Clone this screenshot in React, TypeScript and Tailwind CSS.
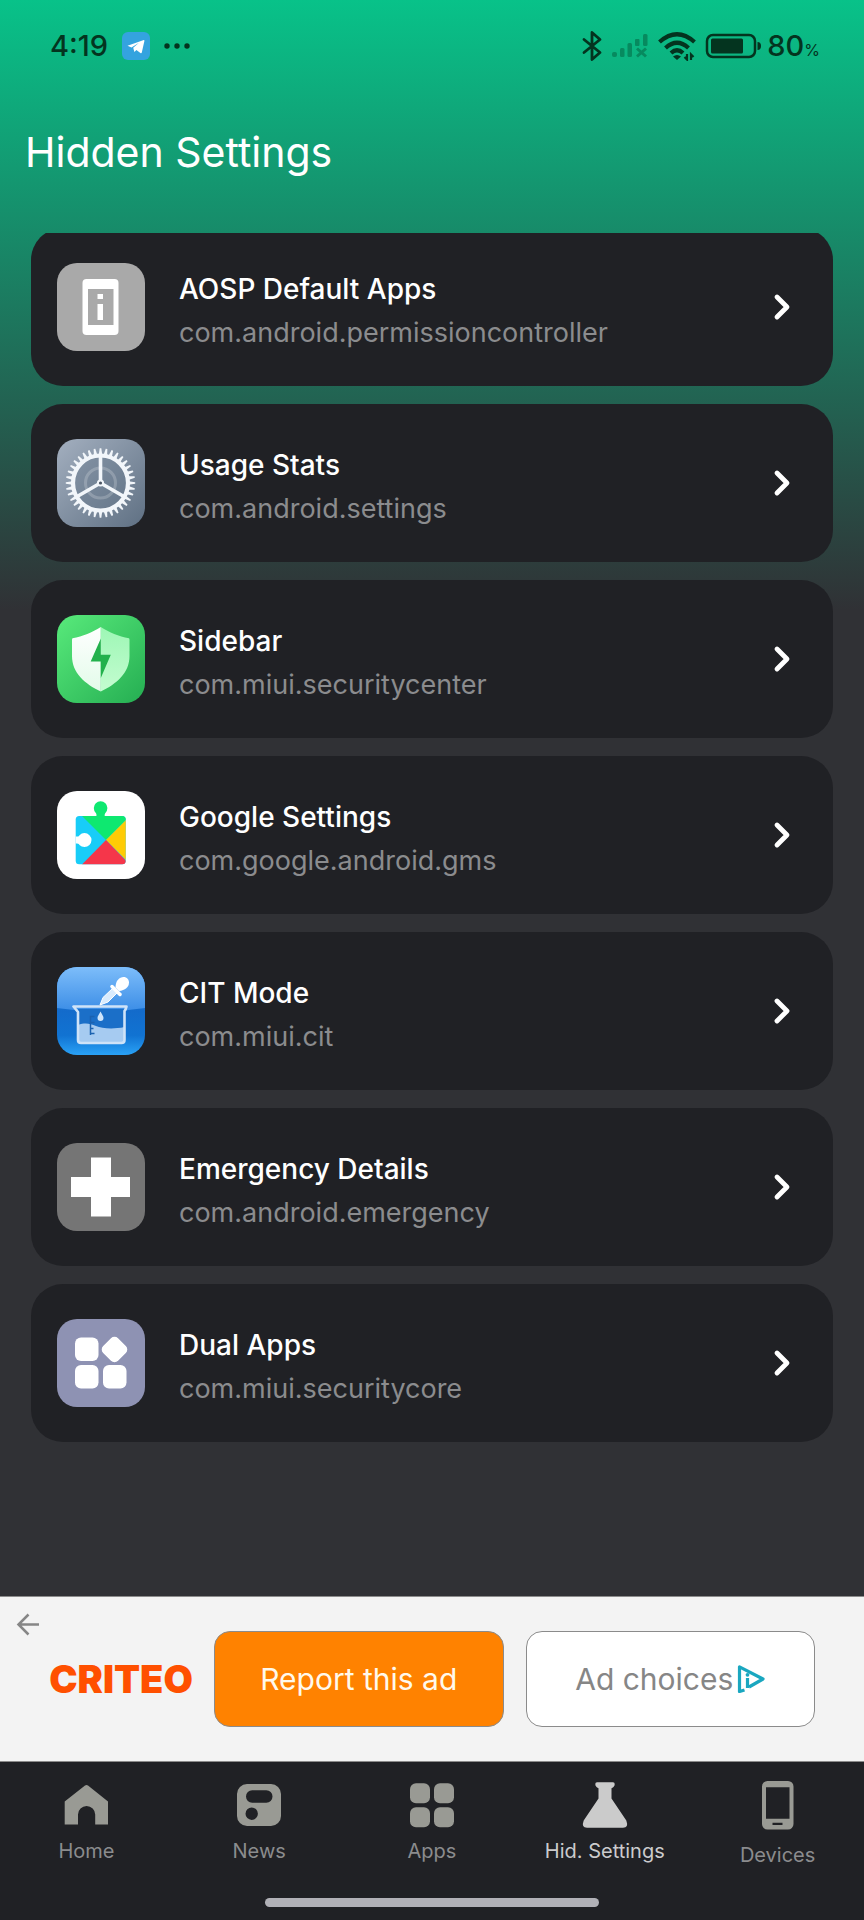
import React from 'react';

type IconProps = { className?: string };

function AospIcon() {
  return (
    <svg viewBox="0 0 88 88" className="block size-full" aria-hidden="true">
      <rect width="88" height="88" fill="#a9a9a9" />
      <rect x="25.5" y="16" width="36" height="56" rx="4" fill="#fff" />
      <rect x="31" y="26" width="25.5" height="36" fill="#a9a9a9" />
      <rect x="40.5" y="31" width="5.5" height="5" fill="#fff" />
      <rect x="40.5" y="41" width="5.5" height="16" fill="#fff" />
    </svg>
  );
}

function SettingsIcon() {
  const teeth = Array.from({ length: 36 }, (_, i) => i * 10);
  return (
    <svg viewBox="0 0 88 88" className="block size-full" aria-hidden="true">
      <defs>
        <linearGradient id="settings-bg" x1="0" y1="0" x2="1" y2="1">
          <stop offset="0" stopColor="#a3afbf" />
          <stop offset="1" stopColor="#5f7083" />
        </linearGradient>
      </defs>
      <rect width="88" height="88" fill="url(#settings-bg)" />
      <circle cx="43.5" cy="44" r="26" fill="#5b6d82" fillOpacity="0.3" />
      <circle cx="43.5" cy="44" r="15" fill="none" stroke="#fff" strokeOpacity="0.2" strokeWidth="3" />
      <g fill="#f2f6fa">
        {teeth.map((a) => (
          <path key={a} d="M41.7 16L42.7 9.3H44.3L45.3 16z" transform={`rotate(${a} 43.5 44)`} />
        ))}
      </g>
      <circle cx="43.5" cy="44" r="27.5" fill="none" stroke="#f2f6fa" strokeWidth="4.2" />
      <path d="M43.5 44V18M43.5 44L21 57M43.5 44L66 57" stroke="#f2f6fa" strokeWidth="3.6" />
      <circle cx="43.5" cy="44" r="3.6" fill="#f2f6fa" />
      <circle cx="43.5" cy="44" r="1.6" fill="#4b5563" />
    </svg>
  );
}

function SecurityIcon() {
  return (
    <svg viewBox="0 0 88 88" className="block size-full" aria-hidden="true">
      <defs>
        <linearGradient id="security-bg" x1="0" y1="0" x2="1" y2="1">
          <stop offset="0" stopColor="#58ea7b" />
          <stop offset="1" stopColor="#25ae52" />
        </linearGradient>
        <linearGradient id="security-left" x1="0" y1="0" x2="0" y2="1">
          <stop offset="0" stopColor="#ffffff" />
          <stop offset="1" stopColor="#e2fbe9" />
        </linearGradient>
        <linearGradient id="security-right" x1="0" y1="0" x2="0" y2="1">
          <stop offset="0" stopColor="#9df7b5" />
          <stop offset="1" stopColor="#c4fcd0" />
        </linearGradient>
      </defs>
      <rect width="88" height="88" fill="url(#security-bg)" />
      <path d="M43.8 12C35 17.5 26 21.5 15.5 23.2Q15 24 15 25v16c0 17 13 28 28.8 35.5z" fill="url(#security-left)" />
      <path d="M43.8 12C52.5 17.5 61.5 21.5 72 23.2Q72.5 24 72.5 25v16c0 17-13 28-28.7 35.5z" fill="url(#security-right)" />
      <path d="M43.8 23.5L33.7 46.6H43.8V63L53.8 39.7H43.8z" fill="#22b14c" />
    </svg>
  );
}

function PlayServicesIcon() {
  return (
    <svg viewBox="0 0 88 88" className="block size-full" aria-hidden="true">
      <defs>
        <clipPath id="puzzle">
          <rect x="18.7" y="25" width="50" height="48.3" rx="3.5" />
        </clipPath>
      </defs>
      <rect width="88" height="88" fill="#fff" />
      <g clipPath="url(#puzzle)">
        <rect x="18" y="24" width="52" height="50" fill="#18cdf8" />
        <path d="M24 24L49 49L74 24z" fill="#0ee870" />
        <path d="M74 24L49 49L74 74z" fill="#ffcb05" />
        <path d="M24.5 74L49 49L73 74z" fill="#f5364a" />
        <path d="M18 45.5c3 0 4 0 4.5-1.3a7 7 0 1 1 0 9.8c-.5-1.4-1.5-1.5-4.5-1.5z" fill="#fff" />
      </g>
      <path d="M38 25.5c2 0 1.800-2 .8-3.600a6.800 6.800 0 1 1 9.600 0c-1 1.600-1.200 3.600 .8 3.600z" fill="#0ee870" />
    </svg>
  );
}

function CitIcon() {
  return (
    <svg viewBox="0 0 88 88" className="block size-full" aria-hidden="true">
      <defs>
        <linearGradient id="cit-bg" x1="0" y1="0" x2="0" y2="1">
          <stop offset="0" stopColor="#3f92ea" />
          <stop offset="0.5" stopColor="#136bcb" />
          <stop offset="0.78" stopColor="#1173d2" />
          <stop offset="1" stopColor="#2aa2f6" />
        </linearGradient>
        <linearGradient id="cit-gloss" x1="0" y1="0" x2="0" y2="1">
          <stop offset="0" stopColor="#7dbdfa" />
          <stop offset="1" stopColor="#3b8de6" />
        </linearGradient>
      </defs>
      <rect width="88" height="88" fill="url(#cit-bg)" />
      <path d="M0 0H88V41Q44 48 0 41z" fill="url(#cit-gloss)" />
      <path d="M21 42H67.5V75H21z" fill="#1b6fc8" />
      <path d="M21 58c7-2.5 12-1.5 18 1s17 3.5 28.5 1v15H21z" fill="#a6cbf1" />
      <path d="M16.5 39.5H69.5L68.5 42.5L67.5 44V73q0 3-3 3H24q-3 0-3-3V45z" fill="none" stroke="#cfe3f8" strokeWidth="2.6" strokeLinejoin="round" />
      <path d="M37.5 49.5H33.5V68M33.5 55.5H37.5M33.5 61.5H36.5M33.5 66.5H37.5" fill="none" stroke="#1b62b0" strokeWidth="1.5" />
      <path d="M43.5 44.5c1.500 3 3 4.500 3 6.500a3 3 0 0 1-6 0c0-2 1.500-3.500 3-6.500z" fill="#cfe5fb" />
      <path d="M43 38l3-7.5L56 21l4.5 4.5L51 35z" fill="#d9ebfd" stroke="#fff" strokeWidth="1" />
      <path d="M55 19.5L63 27.5" stroke="#fff" strokeWidth="3.5" strokeLinecap="round" />
      <path d="M58.5 20.5c0-7 4-10.5 8-10.5 3.500 0 5.500 2.500 5.500 5.500 0 4.500-4 8-10 8.500z" fill="#fff" />
    </svg>
  );
}

function EmergencyIcon() {
  return (
    <svg viewBox="0 0 88 88" className="block size-full" aria-hidden="true">
      <rect width="88" height="88" fill="#757575" />
      <path d="M34 14.5H54V34H73V54H54V73.5H34V54H14V34H34z" fill="#fff" />
    </svg>
  );
}

function DualAppsIcon() {
  return (
    <svg viewBox="0 0 88 88" className="block size-full" aria-hidden="true">
      <rect width="88" height="88" fill="#8e92b3" />
      <g fill="#fff">
        <rect x="18" y="18.5" width="23.5" height="23.5" rx="6" />
        <rect x="18" y="46" width="23.5" height="23.5" rx="6" />
        <rect x="46" y="46" width="23.5" height="23.5" rx="6" />
        <rect x="47" y="20" width="21" height="21" rx="5" transform="rotate(45 57.5 30.5)" />
      </g>
    </svg>
  );
}

function HomeIcon({ className }: IconProps) {
  return (
    <svg viewBox="0 0 48 48" className={className} fill="currentColor" aria-hidden="true">
      <path d="M23 4.6q1.5-1.1 3 0L46 20.5V43.5H33.2V33.5a8.6 8.6 0 0 0-17.2 0V43.5H2.7V20.5z" />
    </svg>
  );
}

function NewsIcon({ className }: IconProps) {
  return (
    <svg viewBox="0 0 48 48" className={className} fill="currentColor" aria-hidden="true">
      <path
        fillRule="evenodd"
        d="M12 3H36a10 10 0 0 1 10 10V35a10 10 0 0 1-10 10H12A10 10 0 0 1 2 35V13A10 10 0 0 1 12 3zM17.2 9.3a6.2 6.2 0 0 0 0 12.4H31.3a6.2 6.2 0 0 0 0-12.4zM16.7 26.5a6.2 6.2 0 1 0 0 12.4a6.2 6.2 0 0 0 0-12.4z"
      />
    </svg>
  );
}

function AppsIcon({ className }: IconProps) {
  return (
    <svg viewBox="0 0 48 48" className={className} fill="currentColor" aria-hidden="true">
      <rect x="2" y="2.3" width="20" height="20" rx="6" />
      <rect x="26" y="2.3" width="20" height="20" rx="6" />
      <rect x="2" y="26.2" width="20" height="20" rx="6" />
      <rect x="26" y="26.2" width="20" height="20" rx="6" />
    </svg>
  );
}

function FlaskIcon({ className }: IconProps) {
  return (
    <svg viewBox="0 0 48 48" className={className} fill="currentColor" aria-hidden="true">
      <path d="M16 1.3H32q1.7 0 1.7 1.7 0 3-3.2 4.3V17.5L45.3 39.5Q48 46.7 42 46.7H6Q0 46.7 2.7 39.5L17.5 17.5V7.3Q14.3 6 14.3 3q0-1.7 1.7-1.7z" />
    </svg>
  );
}

function DeviceIcon({ className }: IconProps) {
  return (
    <svg viewBox="0 0 48 52" className={className} fill="currentColor" aria-hidden="true">
      <path
        fillRule="evenodd"
        d="M13.5 0H34a5.5 5.5 0 0 1 5.5 5.5V43a5.5 5.5 0 0 1-5.5 5.5H13.5A5.5 5.5 0 0 1 8 43V5.5A5.5 5.5 0 0 1 13.5 0zM12 6.2V37.7H35.5V6.2zM18.5 41.7V44H28.5V41.7z"
      />
    </svg>
  );
}

const items = [
  { name: 'AOSP Default Apps', pkg: 'com.android.permissioncontroller', icon: AospIcon },
  { name: 'Usage Stats', pkg: 'com.android.settings', icon: SettingsIcon },
  { name: 'Sidebar', pkg: 'com.miui.securitycenter', icon: SecurityIcon },
  { name: 'Google Settings', pkg: 'com.google.android.gms', icon: PlayServicesIcon },
  { name: 'CIT Mode', pkg: 'com.miui.cit', icon: CitIcon },
  { name: 'Emergency Details', pkg: 'com.android.emergency', icon: EmergencyIcon },
  { name: 'Dual Apps', pkg: 'com.miui.securitycore', icon: DualAppsIcon },
];

const tabs = [
  { label: 'Home', icon: HomeIcon, size: 'h-12 w-12' },
  { label: 'News', icon: NewsIcon, size: 'h-12 w-12' },
  { label: 'Apps', icon: AppsIcon, size: 'h-12 w-12' },
  { label: 'Hid. Settings', icon: FlaskIcon, size: 'h-12 w-12', active: true },
  { label: 'Devices', icon: DeviceIcon, size: 'h-13 w-12' },
];

function StatusBar() {
  return (
    <div className="flex h-[92px] items-center justify-between pr-11 pl-[50px] text-[#04341f]">
      <div className="flex items-center gap-[14px]">
        <span className="text-[29px] leading-9 font-medium">4:19</span>
        <svg viewBox="0 0 28 28" className="size-7" aria-hidden="true">
          <rect width="28" height="28" rx="6" fill="#34a3df" />
          <path d="M5.5 13.8L21.8 8q.8 0 .6 1L19.8 20.6q-.4 1-1.4.4L14.4 18l-2 2-1.2-4.2L17 10.8 9.5 15.4z" fill="#fff" />
        </svg>
        <svg viewBox="0 0 26 6" className="h-1.5 w-[26px]" fill="currentColor" aria-hidden="true">
          <circle cx="3" cy="3" r="2.7" />
          <circle cx="13" cy="3" r="2.7" />
          <circle cx="23" cy="3" r="2.7" />
        </svg>
      </div>
      <div className="flex items-center gap-[9px]">
        <svg viewBox="0 0 20 32" className="h-8 w-5" fill="none" stroke="currentColor" strokeWidth="2.8" strokeLinejoin="round" strokeLinecap="round" aria-hidden="true">
          <path d="M2 9.5L18 22.5L10 29.5V2.5L18 9.5L2 22.5" />
        </svg>
        <svg viewBox="0 0 38 26" className="h-[26px] w-[38px] text-[#078a5f]" fill="currentColor" aria-hidden="true">
          <rect x="1" y="19" width="5" height="5" rx="2" />
          <rect x="9" y="15" width="4.5" height="9" rx="1.5" />
          <rect x="16.5" y="10" width="4.5" height="14" rx="1.5" />
          <rect x="24" y="6" width="4.5" height="7" rx="1" />
          <rect x="32" y="1" width="4.5" height="12" rx="1.5" />
          <path d="M26 15.5L35 23.5M35 15.5L26 23.5" stroke="currentColor" strokeWidth="3" />
        </svg>
        <svg viewBox="0 0 38 30" className="h-[30px] w-[38px]" fill="none" stroke="currentColor" strokeWidth="4.2" aria-hidden="true">
          <path d="M1.5 11Q19-4.5 36.5 11" />
          <path d="M7.5 17Q19 6.500 30.5 17" />
          <path d="M13 22Q19 16.5 25 22" />
          <path d="M15 25.5L19 29L23 25.5Q19 22.500 15 25.5z" fill="currentColor" stroke="none" />
          <path d="M29 23V28.5L26.5 26M33 29V23.5L35.5 26" strokeWidth="2.2" />
        </svg>
        <span className="flex items-center gap-1">
          <svg viewBox="0 0 58 26" className="h-[26px] w-[58px]" aria-hidden="true">
            <rect x="2" y="2" width="48" height="22" rx="6" fill="none" stroke="currentColor" strokeWidth="2.5" />
            <rect x="6" y="5.5" width="32" height="15" rx="1.5" fill="currentColor" />
            <path d="M52.5 9Q56 9 56 13T52.5 17z" fill="currentColor" />
          </svg>
          <span className="flex items-baseline">
            <span className="text-[29px] leading-9 font-medium">80</span>
            <span className="text-base">%</span>
          </span>
        </span>
      </div>
    </div>
  );
}

function AdBanner() {
  return (
    <aside className="flex h-[166px] items-center border-y border-[#8b8b8b] bg-[#f3f3f3] pr-[49px] pl-4">
      <button type="button" aria-label="Back" className="mt-4 self-start text-[#868686]">
        <svg viewBox="0 0 24 24" className="block size-6" fill="none" stroke="currentColor" strokeWidth="2.5" aria-hidden="true">
          <path d="M23 11.5H2.5M12.5 1.5L2.5 11.5L12.5 21.5" />
        </svg>
      </button>
      <span className="ml-2 w-[146px] text-center text-[38px] leading-10 font-black text-[#ff5000]">CRITEO</span>
      <div className="ml-5 flex flex-1 gap-[22px]">
        <button type="button" className="h-24 flex-1 rounded-2xl border border-[#8b8b8b] bg-[#ff8200] text-[30px] text-[#fff9ec]">
          Report this ad
        </button>
        <button type="button" className="flex h-24 flex-1 items-center justify-center gap-1 rounded-2xl border border-[#8b8b8b] bg-white text-[30px] text-[#868686]">
          Ad choices
          <svg viewBox="0 0 28 28" className="size-7" fill="none" stroke="#1aa7c0" strokeWidth="3.2" strokeLinejoin="round" aria-hidden="true">
            <path d="M7.5 25L2.5 26.5V1.8L26 14L12 22" />
            <path d="M10.5 13V23" />
            <circle cx="10.5" cy="9.8" r="1.9" fill="#1aa7c0" stroke="none" />
          </svg>
        </button>
      </div>
    </aside>
  );
}

export default function App() {
  return (
    <div className="flex min-h-screen flex-col bg-[#303135] bg-[linear-gradient(to_bottom,#08c289_0px,#303135_610px)] font-['Inter','Noto_Sans',sans-serif]">
      <header>
        <StatusBar />
        <h1 className="h-[141px] px-[25px] pt-8 text-[41px] leading-[56px] text-white">Hidden Settings</h1>
      </header>

      <main className="flex-1 overflow-hidden px-[31px]">
        {/* the list is scrolled a little, so the first card is cut at the top */}
        <ul className="-mt-[5px] flex flex-col gap-[18px]">
          {items.map((item) => (
            <li key={item.pkg}>
              <button type="button" className="flex h-[158px] w-full items-center rounded-[32px] bg-[#202125] pr-[42px] pl-[26px] text-left">
                <span className="size-[88px] shrink-0 overflow-hidden rounded-[20px]">
                  <item.icon />
                </span>
                <span className="ml-[34px] flex min-w-0 flex-1 flex-col gap-2 pt-2">
                  <span className="text-[28px] leading-9 font-medium text-white">{item.name}</span>
                  <span className="text-[27px] leading-9 text-[#8b8c8e]">{item.pkg}</span>
                </span>
                <svg viewBox="0 0 18 28" className="h-7 w-[18px] shrink-0" fill="none" stroke="#fff" strokeWidth="4.8" strokeLinecap="round" strokeLinejoin="round" aria-hidden="true">
                  <path d="M4 4L14 14L4 24" />
                </svg>
              </button>
            </li>
          ))}
        </ul>
      </main>

      <footer>
        <AdBanner />
        <nav className="flex h-[158px] flex-col justify-between bg-[#202125] pt-[19px] pb-[13px]">
          <div className="grid grid-cols-5">
            {tabs.map((tab) => (
              <a key={tab.label} href="#" className={`flex flex-col items-center gap-[10px] ${tab.active ? 'text-[#cbcbcb]' : 'text-[#999a94]'}`}>
                <tab.icon className={tab.size} />
                <span className={`text-[20px] leading-6 ${tab.active ? 'text-[#cbcbcd]' : 'text-[#8b8c8e]'}`}>{tab.label}</span>
              </a>
            ))}
          </div>
          <div className="mx-auto h-[9px] w-[334px] rounded-full bg-[#b1b1b7]" />
        </nav>
      </footer>
    </div>
  );
}
